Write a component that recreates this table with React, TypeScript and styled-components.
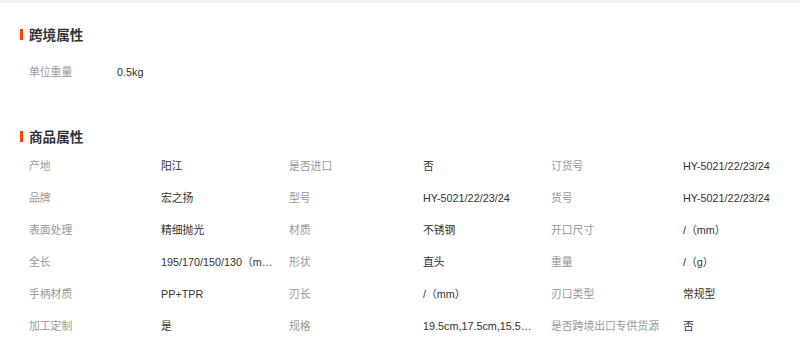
import React from "react";
import styled, { createGlobalStyle } from "styled-components";

const Global = createGlobalStyle`
  html, body { margin: 0; padding: 0; background: #fff; }
  body {
    font-family: "Liberation Sans", "Noto Sans CJK SC", sans-serif;
    color: #333;
  }
`;

const Page = styled.div`
  width: 800px;
  height: 345px;
  overflow: hidden;
  background: #fff;
  border-top: 3px solid #f3f3f3;
  box-sizing: border-box;
`;

const Section = styled.section<{ $top: number }>`
  padding: ${(p) => p.$top}px 0 0 20px;
`;

const Title = styled.h3`
  display: flex;
  align-items: center;
  margin: 0;
  height: 20px;
  font-size: 13.6px;
  font-weight: bold;
  color: #333;
  &::before {
    content: "";
    width: 3px;
    height: 11px;
    background: #ff4400;
    margin-right: 6px;
  }
`;

const Table = styled.div<{ $cols: string; $top: number }>`
  display: grid;
  grid-template-columns: ${(p) => p.$cols};
  padding: ${(p) => p.$top}px 0 0 9px;
`;

const Cell = styled.div<{ $label?: boolean }>`
  height: 32px;
  line-height: 32px;
  font-size: 10.8px;
  color: ${(p) => (p.$label ? "#999" : "#333")};
  white-space: nowrap;
  overflow: hidden;
  text-overflow: ellipsis;
  padding-right: ${(p) => (p.$label ? 4 : 14)}px;
`;

const crossBorder: [string, string][] = [["单位重量", "0.5kg"]];

const attrs: [string, string][] = [
  ["产地", "阳江"],
  ["是否进口", "否"],
  ["订货号", "HY-5021/22/23/24"],
  ["品牌", "宏之扬"],
  ["型号", "HY-5021/22/23/24"],
  ["货号", "HY-5021/22/23/24"],
  ["表面处理", "精细抛光"],
  ["材质", "不锈钢"],
  ["开口尺寸", "/（mm）"],
  ["全长", "195/170/150/130（mm）"],
  ["形状", "直头"],
  ["重量", "/（g）"],
  ["手柄材质", "PP+TPR"],
  ["刃长", "/（mm）"],
  ["刃口类型", "常规型"],
  ["加工定制", "是"],
  ["规格", "19.5cm,17.5cm,15.5cm,13.5cm"],
  ["是否跨境出口专供货源", "否"],
];

export default function App() {
  return (
    <>
      <Global />
      <Page>
        <Section $top={21}>
          <Title>跨境属性</Title>
          <Table $cols="88px 1fr" $top={12}>
            {crossBorder.map(([k, v]) => (
              <React.Fragment key={k}>
                <Cell $label>{k}</Cell>
                <Cell>{v}</Cell>
              </React.Fragment>
            ))}
          </Table>
        </Section>
        <Section $top={38}>
          <Title>商品属性</Title>
          <Table $cols="132px 128px 134px 128px 132px 1fr" $top={4}>
            {attrs.map(([k, v]) => (
              <React.Fragment key={k}>
                <Cell $label>{k}</Cell>
                <Cell>{v}</Cell>
              </React.Fragment>
            ))}
          </Table>
        </Section>
      </Page>
    </>
  );
}
